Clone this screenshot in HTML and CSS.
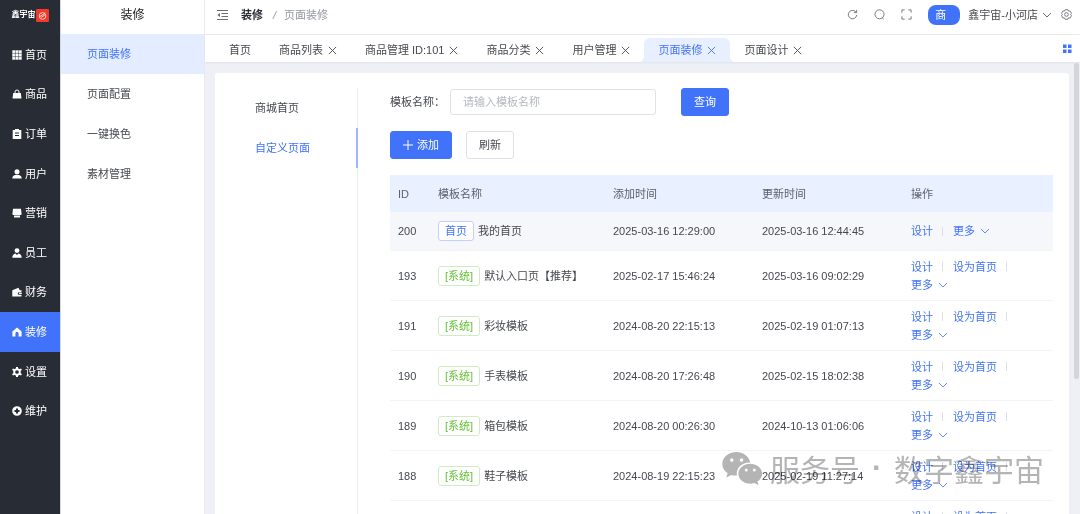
FILE: index.html
```html
<!DOCTYPE html>
<html lang="zh-CN">
<head>
  <meta charset="UTF-8">
  <meta name="viewport" content="width=device-width, initial-scale=1.0">
  <title>页面装修</title>
  <link rel="stylesheet" href="styles.css">
</head>
<body>
  <!-- 图标 -->
  <svg class="sprite" aria-hidden="true">
    <symbol id="i-close" viewBox="0 0 10 10"><path d="M1 1l8 8M9 1l-8 8" fill="none" stroke="currentColor"/></symbol>
    <symbol id="i-down" viewBox="0 0 10 10"><path d="M1 3l4 4 4-4" fill="none" stroke="currentColor" stroke-width=".8"/></symbol>
  </svg>

  <div class="layout">
    <aside class="sidebar">
      <div class="logo">
        <span>鑫宇宙</span>
        <svg viewBox="0 0 14 14"><rect width="14" height="14" rx="1" fill="#f0392b"/><g fill="none" stroke="#ffd9d2"><circle cx="7" cy="7.5" r="3.6"/><path d="M3.5 8.5L10 4.5M5.5 9l4-2.5"/></g></svg>
      </div>
      <nav class="menu">
        <a href="#"><svg viewBox="0 0 10 10"><path d="M.3.3h9.400v9.400H.3z"/><path d="M3.400.3v9.400M6.600.3v9.400M.3 3.400h9.400M.3 6.600h9.400" stroke="#282c34" stroke-width=".5"/></svg>首页</a>
        <a href="#"><svg viewBox="0 0 10 10"><path d="M1.2 4h7.6L9.5 9.5H.5z"/><path d="M3 5V3a2 2 0 0 1 4 0v2" fill="none" stroke="currentColor"/></svg>商品</a>
        <a href="#"><svg viewBox="0 0 10 10"><path fill-rule="evenodd" d="M.7 1h2.300V0h4v1h2.300v9H.7zM3 3.6v.9h4v-.9zM3 6v.9h4V6z"/></svg>订单</a>
        <a href="#"><svg viewBox="0 0 10 10"><circle cx="5" cy="2.8" r="2.5"/><path d="M.3 9.5C.3 7 2 5.8 5 5.8S9.700 7 9.700 9.500z"/></svg>用户</a>
        <a href="#"><svg viewBox="0 0 10 10"><path d="M1 .7h8l.6 5.300a1 1 0 0 1-1 1H1.400a1 1 0 0 1-1-1zM2 7.500h6v2H2z"/></svg>营销</a>
        <a href="#"><svg viewBox="0 0 10 10"><circle cx="5" cy="2.600" r="2.400"/><path d="M.3 9.700C.3 7.500 1.800 5.700 3.500 5.500L5 7l1.500-1.500c1.700.2 3.200 2 3.200 4.200z"/></svg>员工</a>
        <a href="#"><svg viewBox="0 0 10 10"><path fill-rule="evenodd" d="M.3 3.200L6.500.8l1.200 2.400H9.500v2H7a1.200 1.200 0 0 0 0 2.500h2.500v1.800H.3zM7 5.800h2.800v1.300H7z"/></svg>财务</a>
        <a href="#" class="active"><svg viewBox="0 0 10 10"><path d="M5 .5L9.600 4.500v5H6.600V6.300a1.600 1.600 0 0 0-3.200 0v3.200H.4v-5z"/></svg>装修</a>
        <a href="#"><svg viewBox="0 0 10 10"><circle cx="5" cy="5" r="2.800" fill="none" stroke="currentColor" stroke-width="1.900"/><path d="M4 0h2v2H4zM4 8h2v2H4zM0 3l1-1.600 2 1L2 4zM10 3L9 1.400l-2 1L8 4zM0 7l1 1.600 2-1L2 6zM10 7L9 8.600l-2-1L8 6z"/></svg>设置</a>
        <a href="#"><svg viewBox="0 0 10 10"><path fill-rule="evenodd" d="M5 .2a4.800 4.800 0 1 1 0 9.600A4.800 4.800 0 0 1 5 .2zM4 2.500V4H2.500v2H4v1.500h2V6h1.500V4H6V2.500z"/></svg>维护</a>
      </nav>
    </aside>

    <aside class="submenu">
      <h2>装修</h2>
      <nav>
        <a href="#" class="active">页面装修</a>
        <a href="#">页面配置</a>
        <a href="#">一键换色</a>
        <a href="#">素材管理</a>
      </nav>
    </aside>

    <div class="main">
      <header class="topbar">
        <button class="icon-btn" aria-label="折叠菜单"><svg viewBox="0 0 11 11" fill="none" stroke="currentColor"><path d="M0 1.500h11M4.500 4.500H11M4.500 7.500H11M0 10.500h11"/><path d="M3 4v4L.3 6z" fill="currentColor" stroke="none"/></svg></button>
        <div class="crumbs">
          <strong>装修</strong><i>/</i><span>页面装修</span>
        </div>
        <div class="tools">
          <button class="icon-btn" aria-label="刷新页面"><svg viewBox="0 0 12 12" fill="none" stroke="currentColor"><path d="M10 3.800A4.600 4.600 0 1 0 10.600 6.500M10.500 1v3H7.500"/></svg></button>
          <button class="icon-btn" aria-label="搜索"><svg viewBox="0 0 12 12" fill="none" stroke="currentColor"><circle cx="6" cy="5.800" r="4.900"/><path d="M8.500 9l2 2"/></svg></button>
          <button class="icon-btn" aria-label="全屏"><svg viewBox="0 0 12 12" fill="none" stroke="currentColor"><path d="M1 4V1h3M8 1h3v3M11 8v3H8M4 11H1V8"/></svg></button>
        </div>
        <span class="avatar">商</span>
        <button class="user">鑫宇宙-小河店 <svg class="down"><use href="#i-down"/></svg></button>
        <button class="icon-btn" aria-label="设置"><svg viewBox="0 0 12 12" fill="none" stroke="currentColor"><path d="M4.500.8h3l.7 1.500 1.700-.1 1.500 2.500L10.500 6l.9 1.300-1.500 2.500-1.700-.1-.7 1.500h-3l-.7-1.500-1.700.1L.6 7.300 1.500 6 .6 4.700l1.500-2.500 1.700.1z"/><circle cx="6" cy="6" r="2"/></svg></button>
      </header>

      <div class="tabs">
        <a href="#">首页</a>
        <a href="#">商品列表<svg><use href="#i-close"/></svg></a>
        <a href="#">商品管理 ID:101<svg><use href="#i-close"/></svg></a>
        <a href="#">商品分类<svg><use href="#i-close"/></svg></a>
        <a href="#">用户管理<svg><use href="#i-close"/></svg></a>
        <a href="#" class="active">页面装修<svg><use href="#i-close"/></svg></a>
        <a href="#">页面设计<svg><use href="#i-close"/></svg></a>
        <button class="tabs-more" aria-label="标签操作"><svg viewBox="0 0 10 10"><path d="M1 .5h3.500v3.500H1zM6 .5h3.500v3.500H6zM1 5.500h3.500V9H1zM6 5.500h3.500V9H6z" fill="currentColor"/></svg></button>
      </div>

      <div class="content">
        <section class="card">
          <nav class="side-tabs">
            <a href="#">商城首页</a>
            <a href="#" class="active">自定义页面</a>
          </nav>

          <div class="page">
            <form class="search">
              <label for="name">模板名称：</label>
              <input type="text" id="name" placeholder="请输入模板名称">
              <button type="button" class="btn primary">查询</button>
            </form>
            <div class="actions">
              <button class="btn primary add"><svg viewBox="0 0 10 10"><path d="M5 0v10M0 5h10" stroke="currentColor"/></svg>添加</button>
              <button class="btn">刷新</button>
            </div>

            <table>
              <colgroup>
                <col class="col-id"><col class="col-name"><col class="col-time"><col class="col-time"><col>
              </colgroup>
              <thead>
                <tr><th>ID</th><th>模板名称</th><th>添加时间</th><th>更新时间</th><th>操作</th></tr>
              </thead>
              <tbody>
                <tr class="current">
                  <td>200</td>
                  <td><span class="tag blue">首页</span>我的首页</td>
                  <td>2025-03-16 12:29:00</td>
                  <td>2025-03-16 12:44:45</td>
                  <td><div class="ops"><a href="#">设计</a><i></i><a href="#">更多<svg class="down"><use href="#i-down"/></svg></a></div></td>
                </tr>
                <tr>
                  <td>193</td>
                  <td><span class="tag">[系统]</span>默认入口页【推荐】</td>
                  <td>2025-02-17 15:46:24</td>
                  <td>2025-03-16 09:02:29</td>
                  <td><div class="ops"><a href="#">设计</a><i></i><a href="#">设为首页</a><i></i><a href="#">更多<svg class="down"><use href="#i-down"/></svg></a></div></td>
                </tr>
                <tr>
                  <td>191</td>
                  <td><span class="tag">[系统]</span>彩妆模板</td>
                  <td>2024-08-20 22:15:13</td>
                  <td>2025-02-19 01:07:13</td>
                  <td><div class="ops"><a href="#">设计</a><i></i><a href="#">设为首页</a><i></i><a href="#">更多<svg class="down"><use href="#i-down"/></svg></a></div></td>
                </tr>
                <tr>
                  <td>190</td>
                  <td><span class="tag">[系统]</span>手表模板</td>
                  <td>2024-08-20 17:26:48</td>
                  <td>2025-02-15 18:02:38</td>
                  <td><div class="ops"><a href="#">设计</a><i></i><a href="#">设为首页</a><i></i><a href="#">更多<svg class="down"><use href="#i-down"/></svg></a></div></td>
                </tr>
                <tr>
                  <td>189</td>
                  <td><span class="tag">[系统]</span>箱包模板</td>
                  <td>2024-08-20 00:26:30</td>
                  <td>2024-10-13 01:06:06</td>
                  <td><div class="ops"><a href="#">设计</a><i></i><a href="#">设为首页</a><i></i><a href="#">更多<svg class="down"><use href="#i-down"/></svg></a></div></td>
                </tr>
                <tr>
                  <td>188</td>
                  <td><span class="tag">[系统]</span>鞋子模板</td>
                  <td>2024-08-19 22:15:23</td>
                  <td>2025-02-19 11:27:14</td>
                  <td><div class="ops"><a href="#">设计</a><i></i><a href="#">设为首页</a><i></i><a href="#">更多<svg class="down"><use href="#i-down"/></svg></a></div></td>
                </tr>
                <tr>
                  <td></td>
                  <td></td>
                  <td></td>
                  <td></td>
                  <td><div class="ops"><a href="#">设计</a><i></i><a href="#">设为首页</a><i></i><a href="#">更多<svg class="down"><use href="#i-down"/></svg></a></div></td>
                </tr>
              </tbody>
            </table>
          </div>
        </section>
        <div class="scroll-thumb"></div>
      </div>
    </div>
  </div>

  <div class="watermark">
    <svg viewBox="0 0 40 34">
      <path fill-rule="evenodd" d="M14.500 1C6.500 1 .3 6.300.3 13c0 3.800 2 7 5.300 9.200L4.300 26.500l5-2.600c1.700.5 3.300.7 5.700.6C13.500 17 20 11.200 28.300 11.500 27 5.500 21.300 1 14.500 1zM9.800 7.300a1.800 1.800 0 1 1 0 3.600 1.800 1.800 0 0 1 0-3.600zM19.500 7.300a1.800 1.800 0 1 1 0 3.600 1.800 1.800 0 0 1 0-3.600z"/>
      <path fill-rule="evenodd" d="M28.300 12.700c-6.700 0-11.900 4.500-11.900 10s5.200 10 11.900 10c1.400 0 2.800-.2 4-.6l4.200 2-1.100-3.500c2.900-1.900 4.700-4.700 4.700-7.900 0-5.500-5.200-10-11.800-10zM24.300 17.500a1.500 1.500 0 1 1 0 3 1.500 1.500 0 0 1 0-3zM32.300 17.500a1.500 1.500 0 1 1 0 3 1.500 1.500 0 0 1 0-3z"/>
    </svg>
    <span>服务号</span><b>·</b><span>数字鑫宇宙</span>
  </div>
</body>
</html>
```
FILE: styles.css
```css
* {
  box-sizing: border-box;
}
body {
  margin: 0;
  font-family: "Liberation Sans", "Noto Sans CJK SC", sans-serif;
  font-size: 11px;
  line-height: 18px;
  color: #45484e;
  background: #eef0f5;
  overflow: hidden;
}
a {
  color: inherit;
  text-decoration: none;
}
button, input {
  font: inherit;
  color: inherit;
}
button {
  padding: 0;
  border: none;
  background: none;
  cursor: pointer;
}
svg {
  display: block;
  flex: none;
}
.sprite {
  display: none;
}
.layout {
  display: flex;
  height: 100vh;
}

/* 左侧主菜单 */
.sidebar {
  width: 60px;
  flex: none;
  display: flex;
  flex-direction: column;
  padding-bottom: 83px;
  background: #282c34;
  color: #fff;
}
.logo {
  height: 35px;
  flex: none;
  display: flex;
  align-items: center;
  justify-content: center;
  padding-bottom: 5px;
  font-size: 8px;
  font-weight: bold;
}
.logo svg {
  width: 13px;
  height: 13px;
}
.menu {
  flex: 1;
  display: flex;
  flex-direction: column;
}
.menu a {
  flex: 1;
  max-height: 40px;
  display: flex;
  align-items: center;
  gap: 3px;
  padding-left: 12px;
}
.menu svg {
  width: 10px;
  height: 10px;
  fill: currentColor;
}
.menu .active {
  background: #4073fa;
}

/* 二级菜单 */
.submenu {
  width: 145px;
  flex: none;
  background: #fff;
  border-left: 1px solid #d5d7dc;
  border-right: 1px solid #e9ebf0;
}
.submenu h2 {
  margin: 0;
  height: 34px;
  line-height: 30px;
  font-size: 12px;
  font-weight: normal;
  text-align: center;
  color: #222;
}
.submenu a {
  display: block;
  padding-left: 26px;
  line-height: 40px;
}
.submenu .active {
  color: #4073fa;
  background: #e4edff;
}

/* 顶栏 */
.main {
  flex: 1;
  min-width: 0;
  display: flex;
  flex-direction: column;
}
.topbar {
  height: 35px;
  flex: none;
  display: flex;
  align-items: center;
  padding: 0 8px 5px 12px;
  background: #fff;
  border-bottom: 1px solid #e8eaf3;
}
.icon-btn {
  color: #6b7078;
}
.icon-btn svg {
  width: 11px;
  height: 11px;
}
.crumbs {
  flex: 1;
  margin-left: 13px;
  color: #9297a1;
}
.crumbs strong {
  color: #282c34;
}
.crumbs i {
  margin: 0 8px 0 10px;
}
.tools {
  display: flex;
  gap: 16px;
}
.avatar {
  width: 32px;
  height: 20px;
  margin: 0 8px 0 16px;
  padding-left: 7px;
  border-radius: 8px;
  line-height: 20px;
  background: #4073fa;
  color: #fff;
}
.user {
  display: flex;
  align-items: center;
  gap: 4px;
  margin-right: 9px;
}
.down {
  width: 10px;
  height: 10px;
}

/* 标签页 */
.tabs {
  position: relative;
  height: 27px;
  flex: none;
  display: flex;
  align-items: flex-end;
  padding: 0 8px 0 10px;
  background: #fff;
  box-shadow: 0 1px 2px #e2e4ea;
}
.tabs a {
  position: relative;
  height: 24px;
  display: flex;
  align-items: center;
  gap: 5px;
  padding: 0 14px;
  white-space: nowrap;
}
.tabs a svg {
  width: 9px;
  height: 9px;
}
.tabs .active {
  color: #4073fa;
  background: #e8f0ff;
  border-radius: 6px 6px 0 0;
}
.tabs .active::before,
.tabs .active::after {
  content: "";
  position: absolute;
  bottom: 0;
  width: 4px;
  height: 8px;
}
.tabs .active::before {
  left: -4px;
  background: radial-gradient(ellipse at 0 0, transparent 70%, #e8f0ff 72%);
}
.tabs .active::after {
  right: -4px;
  background: radial-gradient(ellipse at 100% 0, transparent 70%, #e8f0ff 72%);
}
.tabs-more {
  align-self: center;
  margin-left: auto;
  color: #4073fa;
}
.tabs-more svg {
  width: 10px;
  height: 10px;
}

/* 内容区 */
.content {
  position: relative;
  flex: 1;
  min-height: 0;
  overflow: hidden;
  padding: 11px 11px 0 10px;
}
.card {
  display: flex;
  padding: 15px 16px 15px 25px;
  background: #fff;
  border-radius: 3px;
}
.scroll-thumb {
  position: absolute;
  top: 1px;
  right: 1px;
  width: 5px;
  height: 70%;
  border-radius: 3px;
  background: #d3d5da;
}
.side-tabs {
  width: 118px;
  flex: none;
  border-right: 1px solid #e8eaef;
}
.side-tabs a {
  display: block;
  margin-right: -1px;
  padding-left: 15px;
  line-height: 40px;
}
.side-tabs .active {
  color: #4073fa;
  border-right: 2px solid #9db6fc;
}
.page {
  flex: 1;
  min-width: 0;
  padding-left: 32px;
}
.search {
  display: flex;
  align-items: center;
  margin-bottom: 15px;
}
.search input {
  width: 206px;
  height: 26px;
  margin: 0 25px 0 5px;
  padding: 0 12px;
  border: 1px solid #dfe1e7;
  border-radius: 3px;
}
.search input::placeholder {
  color: #b4b8c0;
}
.btn {
  height: 28px;
  padding: 0 12px;
  border: 1px solid #dfe1e7;
  border-radius: 3px;
  background: #fff;
}
.btn.primary {
  border-color: #4073fa;
  background: #4073fa;
  color: #fff;
}
.actions {
  display: flex;
  gap: 14px;
  margin-bottom: 16px;
}
.add {
  display: flex;
  align-items: center;
  gap: 4px;
}
.add svg {
  width: 10px;
  height: 10px;
}

/* 表格 */
table {
  width: 100%;
  table-layout: fixed;
  border-collapse: separate;
  border-spacing: 0;
}
.col-id {
  width: 40px;
}
.col-name {
  width: 175px;
}
.col-time {
  width: 149px;
}
th, td {
  padding: 0 8px;
  text-align: left;
  border-bottom: 1px solid #f3f4f7;
}
th {
  height: 37px;
  font-weight: normal;
  color: #5c616b;
  background: #e9f0ff;
  border-bottom: none;
}
td {
  height: 50px;
}
.current td {
  height: 39px;
  background: #f5f7fb;
}
.tag {
  display: inline-block;
  margin-right: 4px;
  padding: 0 6px;
  border: 1px solid #cdeec0;
  border-radius: 3px;
  background: #fff;
  color: #67c23a;
}
.tag.blue {
  border-color: #c0d1fd;
  color: #4073fa;
}
.ops {
  display: flex;
  flex-wrap: wrap;
  align-items: center;
  color: #4073fa;
}
.ops a {
  display: flex;
  align-items: center;
  gap: 5px;
}
.ops i {
  width: 1px;
  height: 9px;
  margin: 0 10px 0 9px;
  background: #dcdfe6;
}

/* 水印浮在页面右下角 */
.watermark {
  position: absolute;
  right: 36px;
  bottom: 26px;
  display: flex;
  align-items: center;
  font-family: "Noto Sans CJK SC", sans-serif;
  font-size: 30px;
  line-height: 40px;
  color: #b4b4b4;
  mix-blend-mode: multiply;
  pointer-events: none;
}
.watermark svg {
  width: 40px;
  height: 34px;
  margin-right: 8px;
  fill: currentColor;
}
.watermark b {
  width: 34px;
  font-family: "Liberation Sans", sans-serif;
  text-align: center;
}
```
